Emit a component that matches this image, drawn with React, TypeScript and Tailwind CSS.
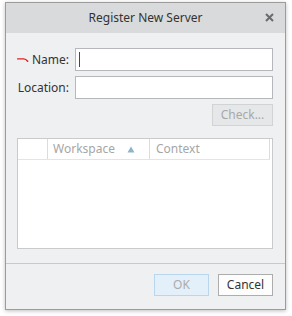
import { useState } from 'react'

const font = { fontFamily: '"Noto Sans", "Open Sans", sans-serif' }

const Field = ({ label, mark = false, caret = false }: { label: string, mark?: boolean, caret?: boolean }) => {
    const [value, setValue] = useState('')
    return (
        <div className="flex items-center">
            <div className="w-[52px] flex items-center justify-end text-[12px] text-[#333] shrink-0">
                {mark && (
                    <svg width="15" height="6" viewBox="0 0 15 6" className="mr-[3px]">
                        <path d="M0.8 1.6 H8.5 Q11 1.6 13.5 4.6" fill="none" stroke="#e02020" strokeWidth="1.8" strokeLinecap="round"/>
                    </svg>
                )}
                {label}
            </div>
            <div className="ml-[6px] flex-1 h-[23px] bg-white border border-[#b5b7ba] relative">
                <input
                    value={value}
                    onChange={(e) => setValue(e.target.value)}
                    className="w-full h-full px-[3px] text-[12px] outline-none bg-transparent"
                />
                {caret && !value && <div className="absolute left-[3px] top-[3px] w-px h-[15px] bg-[#1d4f91]"></div>}
            </div>
        </div>
    )
}

const App = () => {
    return (
        <div className="w-[292px] h-[316px] bg-white pt-[2px] pl-[5px]" style={font}>
            <div className="w-[281px] h-[308px] border border-[#9c9c9c] shadow-[0_1px_4px_rgba(0,0,0,0.25)] flex flex-col bg-[#eff0f1]">
                <div className="h-[30px] bg-[#d9dadb] relative flex items-center justify-center shrink-0">
                    <span className="text-[12px] text-[#333]">Register New Server</span>
                    <svg width="9" height="9" viewBox="0 0 9 9" className="absolute right-[11px] top-[10px]">
                        <path d="M1 1 L8 8 M8 1 L1 8" stroke="#6b6b6b" strokeWidth="2"/>
                    </svg>
                </div>

                <div className="flex-1 flex flex-col pl-[11px] pr-[12px] pt-[15px]">
                    <Field label="Name:" mark caret/>
                    <div className="mt-[5px]">
                        <Field label="Location:"/>
                    </div>
                    <button className="mt-[5px] self-end w-[61px] h-[22px] bg-[#e6e7e8] border border-[#d2d3d4] text-[12px] text-[#a8a8a8]">
                        Check...
                    </button>

                    <div className="mt-[12px] h-[111px] bg-white border border-[#c9cacb] flex flex-col">
                        <div className="h-[21px] flex items-stretch border-b border-[#e3e4e5] mr-[2px] text-[12px] text-[#a6a6a6]">
                            <div className="w-[30px] border-r border-[#dcdcdc]"></div>
                            <div className="w-[102px] border-r border-[#dcdcdc] flex items-center pl-[5px] pr-[14px] justify-between">
                                <span>Workspace</span>
                                <svg width="8" height="7" viewBox="0 0 8 7">
                                    <path d="M4 0.5 L7.5 6.5 H0.5 Z" fill="#8fb3cc"/>
                                </svg>
                            </div>
                            <div className="flex-1 border-r border-[#dcdcdc] flex items-center pl-[6px]">
                                <span>Context</span>
                            </div>
                        </div>
                    </div>
                </div>

                <div className="h-[46px] border-t border-[#c8c9ca] flex justify-end items-start gap-[9px] pt-[10px] pr-[12px] shrink-0">
                    <button className="w-[55px] h-[22px] bg-[#e3eff9] border border-[#b8d6ee] text-[12px] text-[#acacac]">
                        OK
                    </button>
                    <button className="w-[55px] h-[22px] bg-[#fdfdfd] border border-[#adadad] text-[12px] text-[#333]">
                        Cancel
                    </button>
                </div>
            </div>
        </div>
    )
}

export default App
